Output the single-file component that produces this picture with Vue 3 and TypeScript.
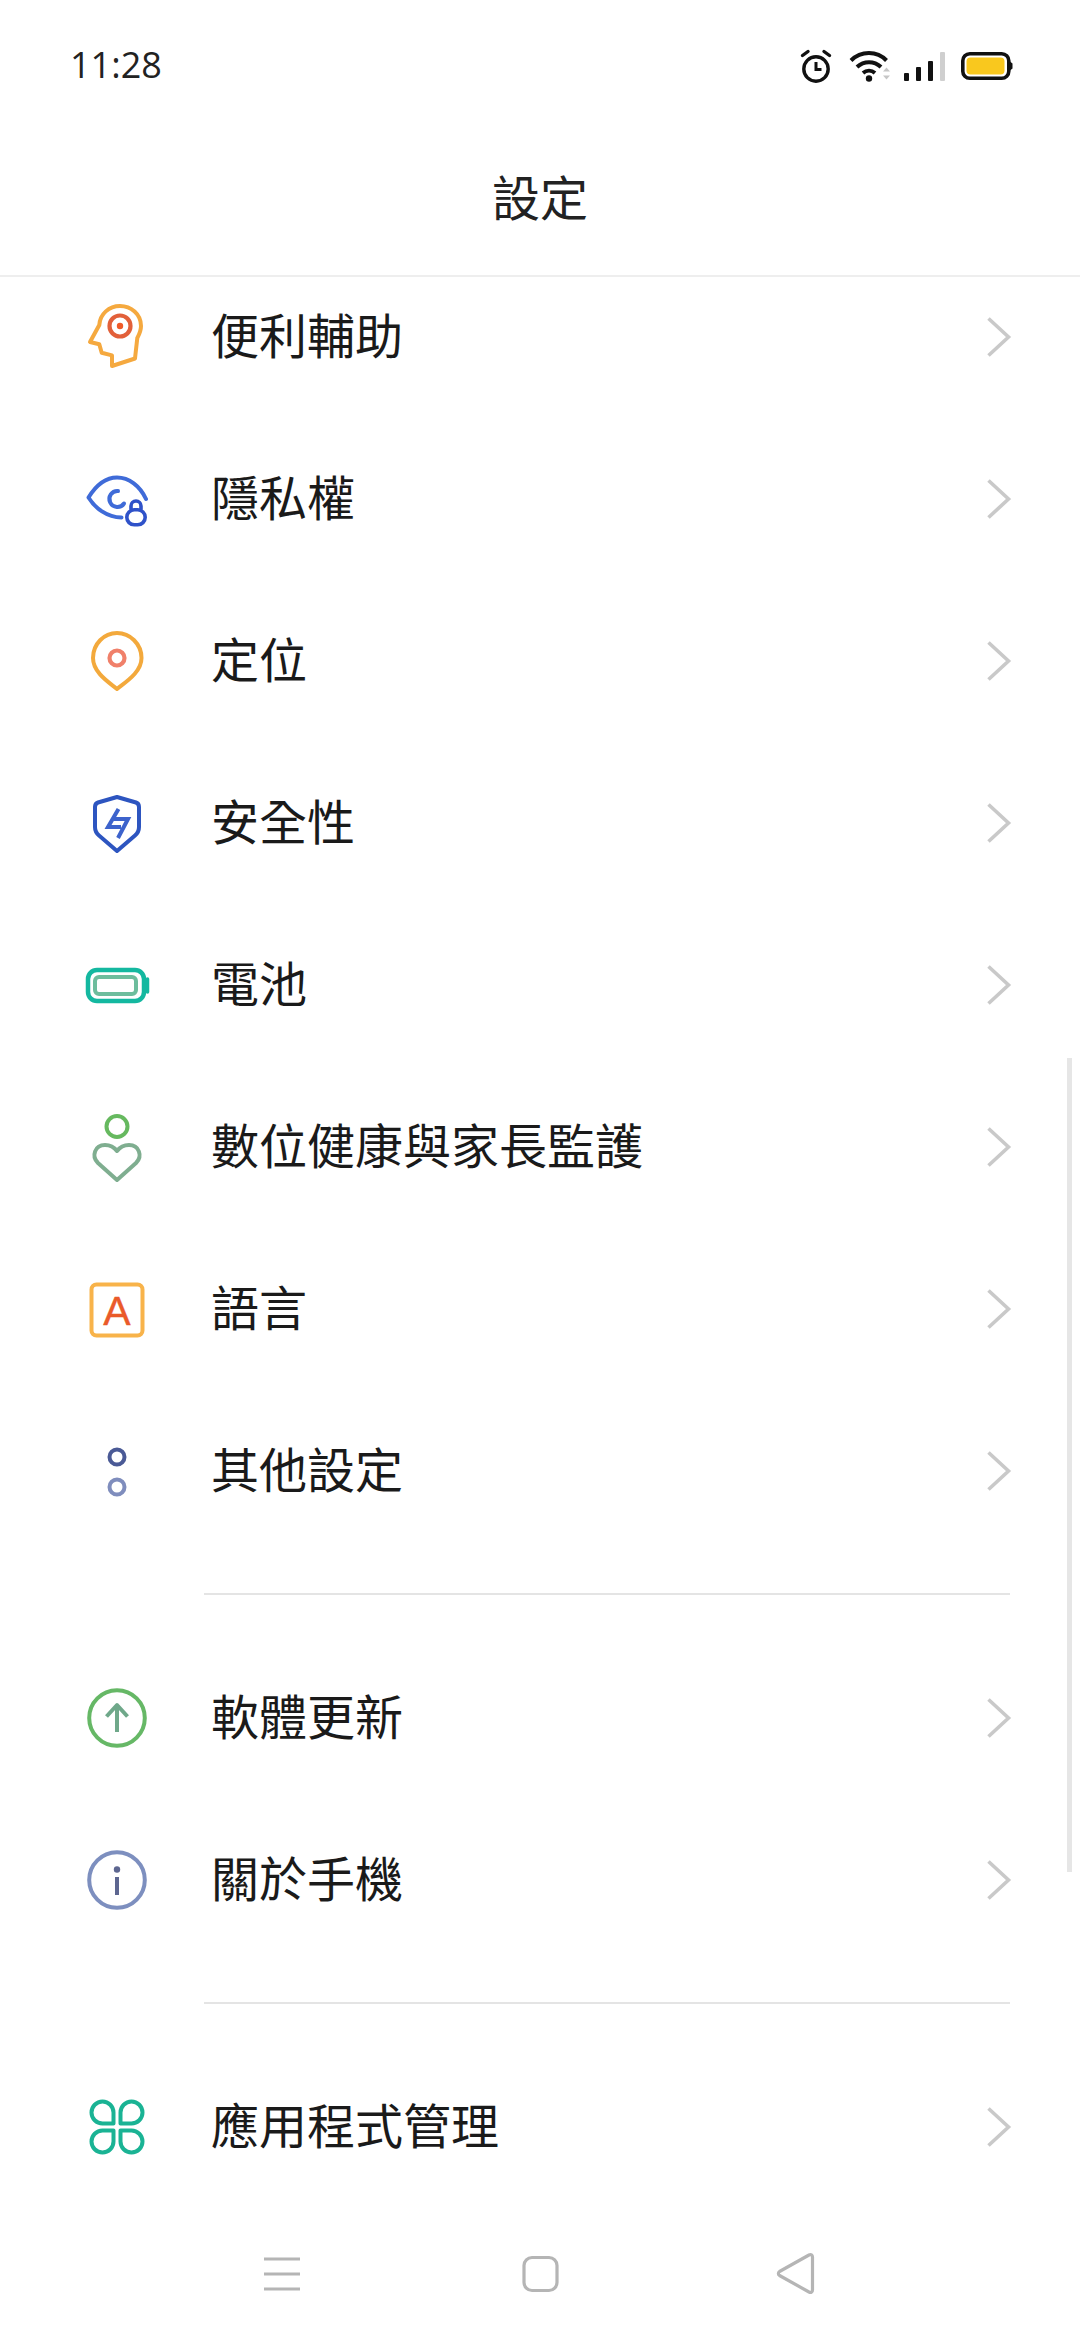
<template>
  <div class="page">
    <header class="status-bar">
      <span class="status-bar__time">11:28</span>
      <div class="status-bar__icons">
        <svg class="ic-alarm" width="32" height="36" viewBox="0 0 32 36" fill="none" stroke="#111" stroke-width="3.4">
          <circle cx="16" cy="21" r="12.2" />
          <path d="M16 14v7.500h5.500" stroke-width="3" />
          <path d="M2.500 7.500 8 3.500M29.500 7.500 24 3.500" stroke-linecap="round" />
        </svg>
        <svg class="ic-wifi" width="46" height="34" viewBox="0 0 46 34" fill="none">
          <path d="M2 11.500C12 1.500 28 1.500 37.500 11.500" stroke="#111" stroke-width="4" />
          <path d="M8 18C15 11.500 25 11.500 32 18" stroke="#111" stroke-width="4" />
          <path d="M14 24C17.500 20.800 22.500 20.800 26 24" stroke="#111" stroke-width="3.800" />
          <circle cx="20" cy="29.500" r="3.200" fill="#111" />
          <path d="M34 22.500 37.500 18.500 41 22.500H34ZM34 26.500 37.500 30.500 41 26.500H34Z" fill="#c6c6c6" />
        </svg>
        <div class="signal">
          <span class="signal__bar signal__bar--1" />
          <span class="signal__bar signal__bar--2" />
          <span class="signal__bar signal__bar--3" />
          <span class="signal__bar signal__bar--4" />
        </div>
        <svg class="ic-battery" width="52" height="28" viewBox="0 0 52 28" fill="none">
          <rect x="1.800" y="1.800" width="46" height="24.400" rx="7" stroke="#111" stroke-width="3.600" />
          <rect x="5.500" y="5.500" width="38" height="17" rx="4" fill="#f9c81e" />
          <path d="M49 9.500 51.500 11.500V16.500L49 18.500Z" fill="#111" />
        </svg>
      </div>
    </header>

    <div class="title-bar">
      <h1 class="title-bar__text">設定</h1>
    </div>

    <main class="list">
      <div class="list__scroll">
        <section v-for="(group, i) in groups" :key="i" class="group">
          <div v-if="i > 0" class="group__divider" />
          <div v-for="item in group" :key="item.label" class="row">
            <svg class="row__icon" width="80" height="80" viewBox="0 0 80 80" fill="none" stroke-width="4" stroke-linecap="round" stroke-linejoin="round">
              <template v-if="item.icon === 'head'">
                <path d="M35 69 58 61.500 60.300 41C63 36 64 33 64 29 64 17 54 9 43 9 32 9 23 17 22.300 28L13 45 22.300 47.300 24.700 55.700 35 58.400Z" stroke="#f5a93f" />
                <circle cx="43" cy="29" r="10.500" stroke="#e2603a" stroke-width="4.200" />
                <circle cx="43" cy="29" r="3.200" fill="#f05a28" />
              </template>
              <template v-else-if="item.icon === 'eye'">
                <path d="M69 40C63 27 52 18.500 40 18.500 28 18.500 18 28 11.500 38.500 18 49 30 58.500 44.500 58.500" stroke="#3f6bd8" />
                <path d="M47 44.500A8 8 0 1 1 41 32" stroke="#3f6bd8" />
                <rect x="49.800" y="50.800" width="18.400" height="15" rx="7.500" stroke="#2f52c9" stroke-width="3.600" />
                <path d="M54 50V47A5 5 0 0 1 64 47V50" stroke="#2f52c9" stroke-width="3.600" />
              </template>
              <template v-else-if="item.icon === 'pin'">
                <path d="M40 68C33 62 16 52 16 37 16 23 27 12 40 12 53 12 64.500 23 64.500 37 64.500 52 47 62 40 68Z" stroke="#f3a93c" />
                <circle cx="40" cy="37" r="7.500" stroke="#f0806a" stroke-width="4.200" />
              </template>
              <template v-else-if="item.icon === 'shield'">
                <path d="M40 14 21 19.500C19 20.200 18 21.500 18 24V44C18 48 19 50 22 52.500L40 68 58 52.500C61 50 62 48 62 44V24C62 21.500 61 20.200 59 19.500Z" stroke="#2d55c0" />
                <path d="M41.500 26 31 44H44M37 36H51L41 55" stroke="#3d63cc" stroke-linecap="butt" stroke-linejoin="miter" />
              </template>
              <template v-else-if="item.icon === 'battery'">
                <rect x="11" y="25" width="56" height="31" rx="9" stroke="#14b8a0" stroke-width="4.500" />
                <rect x="18" y="32" width="41" height="17" rx="4" stroke="#6dbd9d" />
                <path d="M70.500 34V47" stroke="#14b8a0" stroke-width="3.500" />
              </template>
              <template v-else-if="item.icon === 'family'">
                <circle cx="40" cy="19.500" r="10.500" stroke="#66b95f" />
                <path d="M40 73 21 56C14 49 18 38 28 38 33 38 37 40 40 44 43 40 47 38 52 38 62 38 66 49 59 56Z" stroke="#7fae90" />
              </template>
              <template v-else-if="item.icon === 'lang'">
                <rect x="14.500" y="15.500" width="51" height="51" rx="5" stroke="#f8b34a" />
                <text x="40" y="56" class="row__glyph" text-anchor="middle">A</text>
              </template>
              <template v-else-if="item.icon === 'dots'">
                <circle cx="40" cy="26" r="7.500" stroke="#4a5a96" />
                <circle cx="40" cy="56" r="7.500" stroke="#7f8dbd" />
              </template>
              <template v-else-if="item.icon === 'update'">
                <circle cx="40" cy="40" r="27.800" stroke="#66b866" />
                <path d="M40 54V27M29.500 38.500 40 27 50.500 38.500" stroke="#6fa88a" stroke-width="4" stroke-linecap="butt" />
              </template>
              <template v-else-if="item.icon === 'info'">
                <circle cx="40" cy="40" r="27.800" stroke="#7d8fbf" />
                <circle cx="40" cy="29.500" r="3.200" fill="#5d6690" />
                <path d="M40 37V55" stroke="#5d6690" stroke-width="4" stroke-linecap="butt" />
              </template>
              <template v-else-if="item.icon === 'apps'">
                <g stroke="#1ab394">
                  <path d="M36.500 36.500H25.500A11 11 0 1 1 36.500 25.500Z" />
                  <path d="M43.500 36.500H54.500A11 11 0 1 0 43.500 25.500Z" />
                  <path d="M36.500 43.500H25.500A11 11 0 1 0 36.500 54.500Z" />
                  <path d="M43.500 43.500H54.500A11 11 0 1 1 43.500 54.500Z" />
                </g>
              </template>
            </svg>
            <span class="row__label">{{ item.label }}</span>
            <svg class="row__chevron" width="26" height="42" viewBox="0 0 26 42" fill="none" stroke="#c9c9c9" stroke-width="3.600">
              <path d="M2.500 2.500 22.500 21 2.500 39.500" />
            </svg>
          </div>
        </section>
      </div>
      <div class="list__scrollbar" />
    </main>

    <nav class="nav-bar">
      <svg width="46" height="46" viewBox="0 0 46 46" fill="none" stroke="#b5b5b5" stroke-width="3">
        <path d="M4 7H40M4 22H40M4 37H40" />
      </svg>
      <svg width="46" height="46" viewBox="0 0 46 46" fill="none" stroke="#b5b5b5" stroke-width="3.200">
        <rect x="7" y="5.500" width="33" height="33" rx="8" />
      </svg>
      <svg width="46" height="46" viewBox="0 0 46 46" fill="none" stroke="#b5b5b5" stroke-width="3.200" stroke-linejoin="round">
        <path d="M5.500 19.500C4 20.500 4 22.500 5.500 23.500L35 40C37 41 38.500 40 38.500 38V5C38.500 3 37 2 35 3Z" />
      </svg>
    </nav>
  </div>
</template>

<script setup lang="ts">
type IconName =
  | 'head'
  | 'eye'
  | 'pin'
  | 'shield'
  | 'battery'
  | 'family'
  | 'lang'
  | 'dots'
  | 'update'
  | 'info'
  | 'apps';

interface SettingItem {
  label: string;
  icon: IconName;
}

const groups: SettingItem[][] = [
  [
    { label: '便利輔助', icon: 'head' },
    { label: '隱私權', icon: 'eye' },
    { label: '定位', icon: 'pin' },
    { label: '安全性', icon: 'shield' },
    { label: '電池', icon: 'battery' },
    { label: '數位健康與家長監護', icon: 'family' },
    { label: '語言', icon: 'lang' },
    { label: '其他設定', icon: 'dots' },
  ],
  [
    { label: '軟體更新', icon: 'update' },
    { label: '關於手機', icon: 'info' },
  ],
  [{ label: '應用程式管理', icon: 'apps' }],
];
</script>

<style>
html,
body {
  margin: 0;
  background: #fff;
}
</style>

<style scoped>
.page {
  width: 1080px;
  height: 2340px;
  display: flex;
  flex-direction: column;
  overflow: hidden;
  background: #fff;
  color: #111;
  font-family: "Noto Sans CJK TC", "Noto Sans", sans-serif;
}

.status-bar {
  height: 132px;
  flex: none;
  display: flex;
  align-items: center;
  justify-content: space-between;
  padding: 0 67px 0 70px;
  box-sizing: border-box;
}

.status-bar__time {
  font-family: "Open Sans", "Noto Sans", sans-serif;
  font-size: 36px;
  line-height: 1;
  margin-bottom: 3px;
  color: #222;
}

.status-bar__icons {
  display: flex;
  align-items: center;
  gap: 17px;
}

.signal {
  display: flex;
  align-items: flex-end;
  gap: 7px;
  height: 29px;
  margin-left: -8px;
  margin-right: -1px;
}

.signal__bar {
  width: 5px;
  background: #111;
  border-radius: 1px;
}

.signal__bar--1 { height: 8px; }
.signal__bar--2 { height: 14px; }
.signal__bar--3 { height: 20px; }
.signal__bar--4 { height: 29px; background: #cfcfcf; }

.title-bar {
  height: 145px;
  flex: none;
  display: flex;
  align-items: center;
  justify-content: center;
  padding-bottom: 17px;
  box-sizing: border-box;
  border-bottom: 2px solid #eeeeee;
}

.title-bar__text {
  margin: 0;
  font-size: 48px;
  font-weight: 400;
  color: #222;
}

.list {
  position: relative;
  flex: 1;
  min-height: 0;
  overflow: hidden;
}

.list__scroll {
  margin-top: -21px;
}

.group__divider {
  height: 2px;
  margin: 41px 70px 42px 204px;
  background: #e4e4e4;
}

.row {
  height: 162px;
  display: flex;
  align-items: center;
  padding: 0 69px 0 77px;
  box-sizing: border-box;
}

.row__icon {
  flex: none;
  margin-right: 54px;
}

.row__glyph {
  font-family: "Liberation Sans", sans-serif;
  font-size: 41px;
  fill: #ea5a2a;
  stroke: #ea5a2a;
  stroke-width: 0.4px;
}

.row__label {
  flex: 1;
  font-size: 48px;
  line-height: 1;
  margin-bottom: 8px;
  color: #1a1a1a;
}

.row__chevron {
  flex: none;
  margin-right: -1px;
}

.list__scrollbar {
  position: absolute;
  top: 781px;
  right: 8px;
  width: 5px;
  height: 814px;
  background: #e6e6e6;
}

.nav-bar {
  height: 135px;
  flex: none;
  display: flex;
  align-items: flex-start;
  gap: 211px;
  padding: 47px 0 0 260px;
  box-sizing: border-box;
}
</style>
